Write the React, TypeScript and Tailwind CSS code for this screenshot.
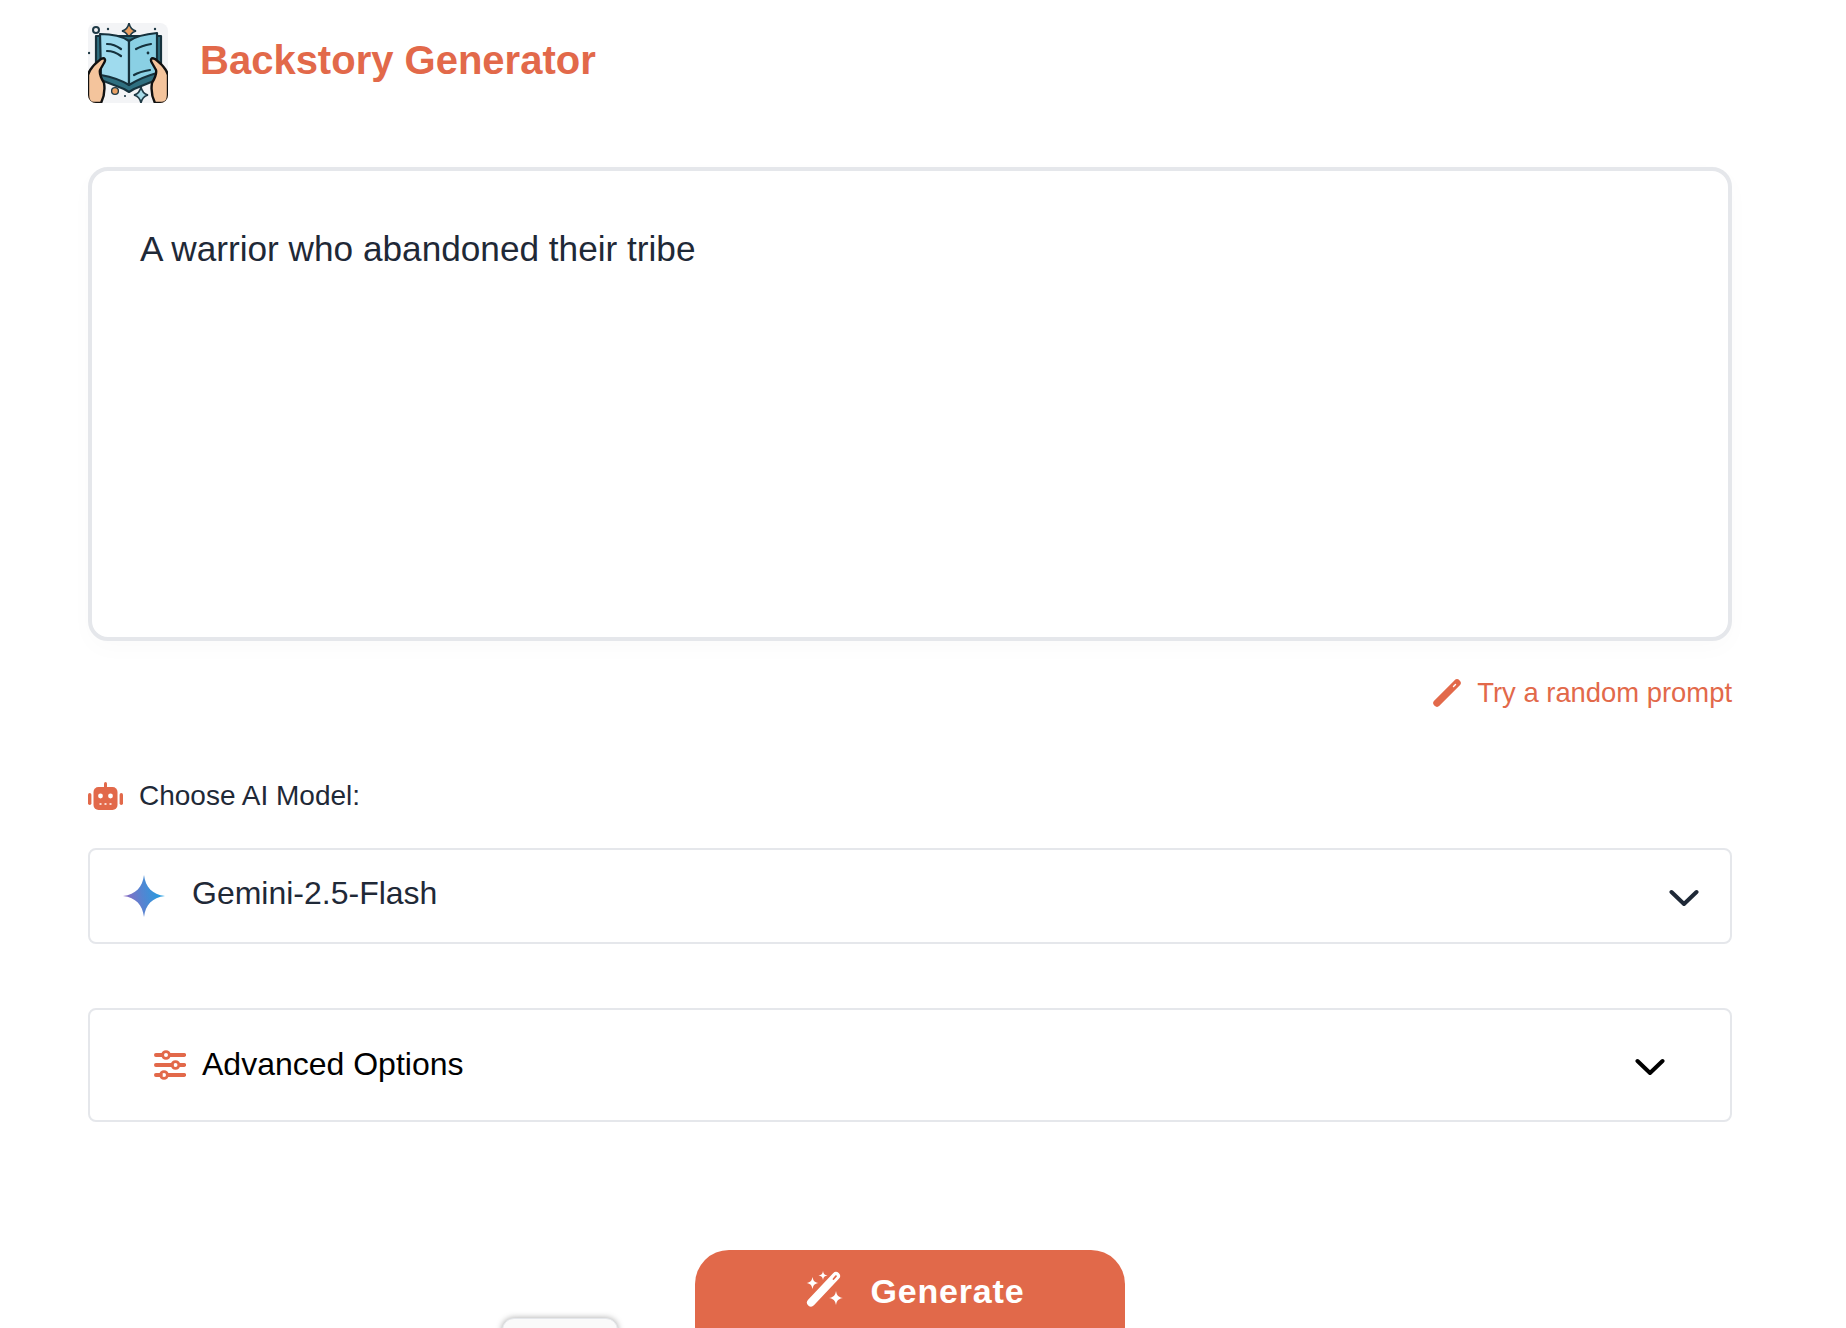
import React from "react";

const F = { fontFamily: '"Liberation Sans", Arial, sans-serif' };

function BookLogo() {
  return (
    <svg viewBox="0 0 80 80" className="w-[80px] h-[80px] rounded-[8px] shrink-0 bg-[#f3f4f6]">
      <circle cx="8" cy="7" r="3" fill="none" stroke="#1f3a46" strokeWidth="2" />
      <circle cx="20" cy="6" r="1.200" fill="#1f3a46" />
      <circle cx="67" cy="6" r="1.200" fill="#1f3a46" />
      <circle cx="1" cy="30" r="1.200" fill="#1f3a46" />
      <path d="M41 0 C42 5 44 7 48 8 C44 9 42 11 41 16 C40 11 38 9 34 8 C38 7 40 5 41 0Z" fill="#eaa063" stroke="#1f3a46" strokeWidth="1.600" />
      <path d="M53 64 C54 69 56 71 60 72 C56 73 54 75 53 80 C52 75 50 73 46 72 C50 71 52 69 53 64Z" fill="#a8dbe8" stroke="#1f3a46" strokeWidth="1.600" />
      <circle cx="27" cy="68" r="3.400" fill="#eaa063" stroke="#1f3a46" strokeWidth="1.400" />
      <circle cx="37" cy="73" r="1.100" fill="#1f3a46" />
      <path d="M8 13 L8 55 L36 66 L41 69 L46 66 L73 55 L73 13 Z" fill="#2f6f80" stroke="#16323d" strokeWidth="2.200" strokeLinejoin="round" />
      <path d="M12 11 C24 11 34 13 41 18 L41 62 C33 57 24 54 13 52 Z" fill="#9fdbee" stroke="#16323d" strokeWidth="2.200" strokeLinejoin="round" />
      <path d="M41 18 C48 13 58 11 69 10 L69 50 C58 53 49 57 41 62 Z" fill="#8ad0e4" stroke="#16323d" strokeWidth="2.200" strokeLinejoin="round" />
      <path d="M19 21 C24 21 29 23 33 26 M19 28 C24 28 29 30 33 33 M46 52 C51 49 56 48 62 47 M48 26 C53 23 58 22 63 21" fill="none" stroke="#16323d" strokeWidth="2.200" strokeLinecap="round" />
      <circle cx="60" cy="30" r="1.400" fill="#16323d" />
      <path d="M0 62 L0 52 C2 45 7 41 13 36 C17 34 18 37 16 40 L12 47 C11 51 13 55 16 60 C17 66 17 72 13 80 L6 80 C2 80 0 77 0 72 Z" fill="#f4c49c" stroke="#111" strokeWidth="2.400" strokeLinejoin="round" />
      <path d="M80 62 L80 52 C78 45 73 41 67 36 C63 34 62 37 64 40 L68 47 C69 51 67 55 64 60 C63 66 63 72 67 80 L74 80 C78 80 80 77 80 72 Z" fill="#f4c49c" stroke="#111" strokeWidth="2.400" strokeLinejoin="round" />
    </svg>
  );
}

function Pencil() {
  return (
    <svg viewBox="0 0 28 28" className="w-[28px] h-[28px] shrink-0">
      <path d="M4 24 L24 4" stroke="#e2694a" strokeWidth="7.400" strokeLinecap="round" />
      <path d="M20.500 7.500 L22.500 5.500" stroke="#fff" strokeWidth="1.400" strokeLinecap="round" />
    </svg>
  );
}

function Robot() {
  return (
    <svg viewBox="0 0 35 28" className="w-[35px] h-[28px] shrink-0">
      <rect x="16" y="0" width="3" height="6" rx="1.500" fill="#e2694a" />
      <rect x="5.500" y="5" width="24" height="23" rx="5" fill="#e2694a" />
      <rect x="0" y="11" width="3.400" height="12" rx="1.700" fill="#e2694a" />
      <rect x="31.600" y="11" width="3.400" height="12" rx="1.700" fill="#e2694a" />
      <circle cx="12.500" cy="14" r="2.400" fill="#fff" />
      <circle cx="22.500" cy="14" r="2.400" fill="#fff" />
      <path d="M11.500 22h2M16.500 22h2M21.500 22h2" stroke="#fff" strokeWidth="1.600" />
    </svg>
  );
}

function GeminiStar() {
  return (
    <svg viewBox="0 0 42 42" className="w-[42px] h-[42px] shrink-0">
      <defs>
        <linearGradient id="gem" x1="0" y1="0.600" x2="1" y2="0.400">
          <stop offset="0" stopColor="#9168c0" />
          <stop offset="0.450" stopColor="#5684d1" />
          <stop offset="1" stopColor="#1ba1e3" />
        </linearGradient>
      </defs>
      <path d="M21 0 C22.500 12 29 19.500 42 21 C29 22.500 22.500 30 21 42 C19.500 30 13 22.500 0 21 C13 19.500 19.500 12 21 0Z" fill="url(#gem)" />
    </svg>
  );
}

function Sliders() {
  return (
    <svg viewBox="0 0 32 30" className="w-[32px] h-[30px] shrink-0" fill="none" stroke="#e2694a" strokeWidth="3.800" strokeLinecap="round">
      <path d="M1.900 5h6M16 5h14.200M1.900 15h16M26 15h4.200M1.900 25h5M14.500 25h15.700" />
      <circle cx="12" cy="5" r="3.400" strokeWidth="2.800" />
      <circle cx="21.500" cy="15" r="3.400" strokeWidth="2.800" />
      <circle cx="10" cy="25" r="3.400" strokeWidth="2.800" />
    </svg>
  );
}

function Wand() {
  return (
    <svg viewBox="0 0 38 36" className="w-[38px] h-[36px] shrink-0">
      <path d="M5 31.500 L30 5" stroke="#fff" strokeWidth="8" strokeLinecap="round" />
      <path d="M27.500 8 L30 5.200" stroke="#e2694a" strokeWidth="1.800" strokeLinecap="round" />
      <path d="M6.500 6 C7.300 10 8.500 11.200 12.500 12 C8.500 12.800 7.300 14 6.500 18 C5.700 14 4.500 12.800 0.500 12 C4.500 11.200 5.700 10 6.500 6Z" fill="#fff" />
      <path d="M17 0 C17.500 3 18.500 4 21.500 4.500 C18.500 5 17.500 6 17 9 C16.500 6 15.500 5 12.500 4.500 C15.500 4 16.500 3 17 0Z" fill="#fff" />
      <path d="M30 20 C30.800 24.500 32.500 26.200 37 27 C32.500 27.800 30.800 29.500 30 34 C29.200 29.500 27.500 27.800 23 27 C27.500 26.200 29.200 24.500 30 20Z" fill="#fff" />
    </svg>
  );
}

function Chevron({ color }: { color: string }) {
  return (
    <svg viewBox="0 0 30 18" className="w-[30px] h-[18px] shrink-0" fill="none" stroke={color} strokeWidth="4" strokeLinecap="round" strokeLinejoin="round">
      <path d="M2.500 3 L15 15 L27.500 3" />
    </svg>
  );
}

export default function App() {
  return (
    <div className="relative h-[1328px] overflow-hidden bg-white" style={F}>
      <div className="pl-[88px] pr-[114px] pt-[23px]">
        <header className="flex items-center gap-[32px] h-[80px]">
          <BookLogo />
          <h1 className="text-[40px] leading-[50px] font-bold text-[#e2694a] -mt-[6px]">Backstory Generator</h1>
        </header>

        <div className="mt-[64px] h-[474px] rounded-[20px] border-4 border-[#e5e7eb] bg-white pl-[48px] pt-[56px] shadow-[0_8px_24px_rgba(0,0,0,0.02)]">
          <p className="text-[35.200px] leading-[44px] text-[#1f2937]">A warrior who abandoned their tribe</p>
        </div>

        <div className="mt-[32px] flex items-center justify-end gap-[16px] h-[40px]">
          <Pencil />
          <span className="text-[27.400px] leading-[40px] text-[#e2694a]">Try a random prompt</span>
        </div>

        <div className="mt-[65px] flex items-center gap-[16px] h-[36px]">
          <Robot />
          <span className="text-[28px] leading-[36px] text-[#1f2937]">Choose AI Model:</span>
        </div>

        <div className="mt-[34px] h-[96px] rounded-[8px] border-2 border-[#e5e7eb] flex items-center pl-[33px] pr-[31px]">
          <GeminiStar />
          <span className="ml-[27px] text-[32px] leading-[40px] text-[#1f2937] -mt-[6px]">Gemini-2.5-Flash</span>
          <span className="ml-auto mt-[4px]"><Chevron color="#1f2937" /></span>
        </div>

        <div className="mt-[64px] h-[114px] rounded-[8px] border-2 border-[#e5e7eb] flex items-center pl-[64px] pr-[65px]">
          <Sliders />
          <span className="ml-[16px] text-[32px] leading-[40px] text-black -mt-[2px]">Advanced Options</span>
          <span className="ml-auto mt-[3px]"><Chevron color="#000000" /></span>
        </div>

        <div className="mt-[128px] flex justify-center">
          <button className="w-[430px] h-[110px] rounded-[34px] bg-[#e1694a] text-white flex items-start justify-center gap-[27px] pt-[21px] pl-[10px]">
            <Wand />
            <span className="text-[34px] leading-[40px] font-bold tracking-[0.800px]">Generate</span>
          </button>
        </div>
      </div>
      <div className="absolute left-[502px] top-[1318px] w-[116px] h-[60px] rounded-[12px] bg-[#fafafa] border border-[#e5e7eb] shadow-[0_0_6px_rgba(0,0,0,0.35)]" />
    </div>
  );
}
